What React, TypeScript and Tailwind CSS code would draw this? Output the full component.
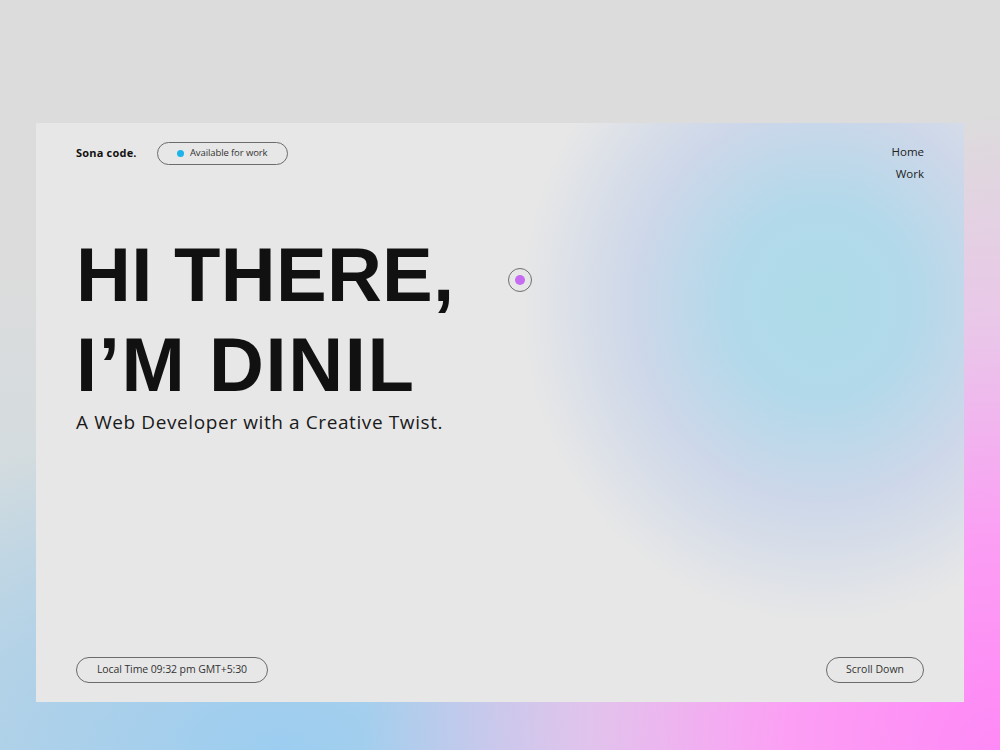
import React from "react";

export default function App() {
  return (
    <div
      className="w-[1000px] h-[750px] overflow-hidden pt-[123px] pl-[36px] bg-[radial-gradient(ellipse_75%_100%_at_100%_100%,#ff88f6_0%,#fc9ef4_28%,rgba(240,190,238,0.75)_55%,rgba(228,214,228,0)_85%),radial-gradient(ellipse_55%_45%_at_28%_100%,#9ccdf0_0%,rgba(165,205,235,0.7)_50%,rgba(200,220,228,0)_100%),linear-gradient(180deg,#dcdcdc_0%,#dcdcdc_35%,#c8dbe2_100%)]"
      style={{ fontFamily: '"Open Sans", sans-serif' }}
    >
      <div className="relative w-[928px] h-[579px] flex flex-col px-[40px] pt-[18px] pb-[19px] bg-[radial-gradient(ellipse_300px_320px_at_785px_180px,#aedbe8_0%,#b2d9ea_30%,rgba(196,210,234,0.75)_62%,rgba(231,231,231,0)_100%),linear-gradient(#e7e7e7,#e7e7e7)] text-[#111]">
        {/* Header */}
        <div className="flex justify-between items-start">
          <div className="flex items-center h-[24px]">
            <span className="text-[11px] font-bold tracking-[0.2px] text-[#111]">Sona code.</span>
            <div className="ml-[20px] w-[131px] h-[23px] rounded-full border border-[#6b6b6b] flex items-center justify-center gap-[6px]">
              <span className="w-[7px] h-[7px] rounded-full bg-[#1db3ea]" />
              <span className="text-[9.5px] text-[#333] tracking-[-0.1px]">Available for work</span>
            </div>
          </div>
          <nav className="flex flex-col items-end text-[11.5px] leading-[22px] text-[#222]">
            <span>Home</span>
            <span>Work</span>
          </nav>
        </div>

        {/* Headline */}
        <h1
          className="mt-[45px] text-[76px] leading-[90px] font-bold text-[#111]"
          style={{ fontFamily: '"Liberation Sans", Arial, sans-serif' }}
        >
          <span className="block tracking-[0.3px]">HI THERE,</span>
          <span className="block tracking-[1.6px]">I’M DINIL</span>
        </h1>
        <p className="text-[19px] leading-[24px] text-[#1a1a1a] tracking-[0.6px]">
          A Web Developer with a Creative Twist.
        </p>

        {/* Cursor circle */}
        <div className="absolute left-[472px] top-[145px] w-[24px] h-[24px] rounded-full border-[1.5px] border-[#6e6e6e] flex items-center justify-center">
          <span className="w-[10px] h-[10px] rounded-full bg-[#c56cf0]" />
        </div>

        {/* Bottom */}
        <div className="mt-auto flex justify-between items-end">
          <div className="w-[192px] h-[26px] rounded-full border border-[#6b6b6b] flex items-center justify-center text-[10.5px] text-[#333] tracking-[-0.1px]">
            Local Time 09:32 pm GMT+5:30
          </div>
          <div className="w-[98px] h-[26px] rounded-full border border-[#6b6b6b] flex items-center justify-center text-[10.5px] text-[#333]">
            Scroll Down
          </div>
        </div>
      </div>
    </div>
  );
}
